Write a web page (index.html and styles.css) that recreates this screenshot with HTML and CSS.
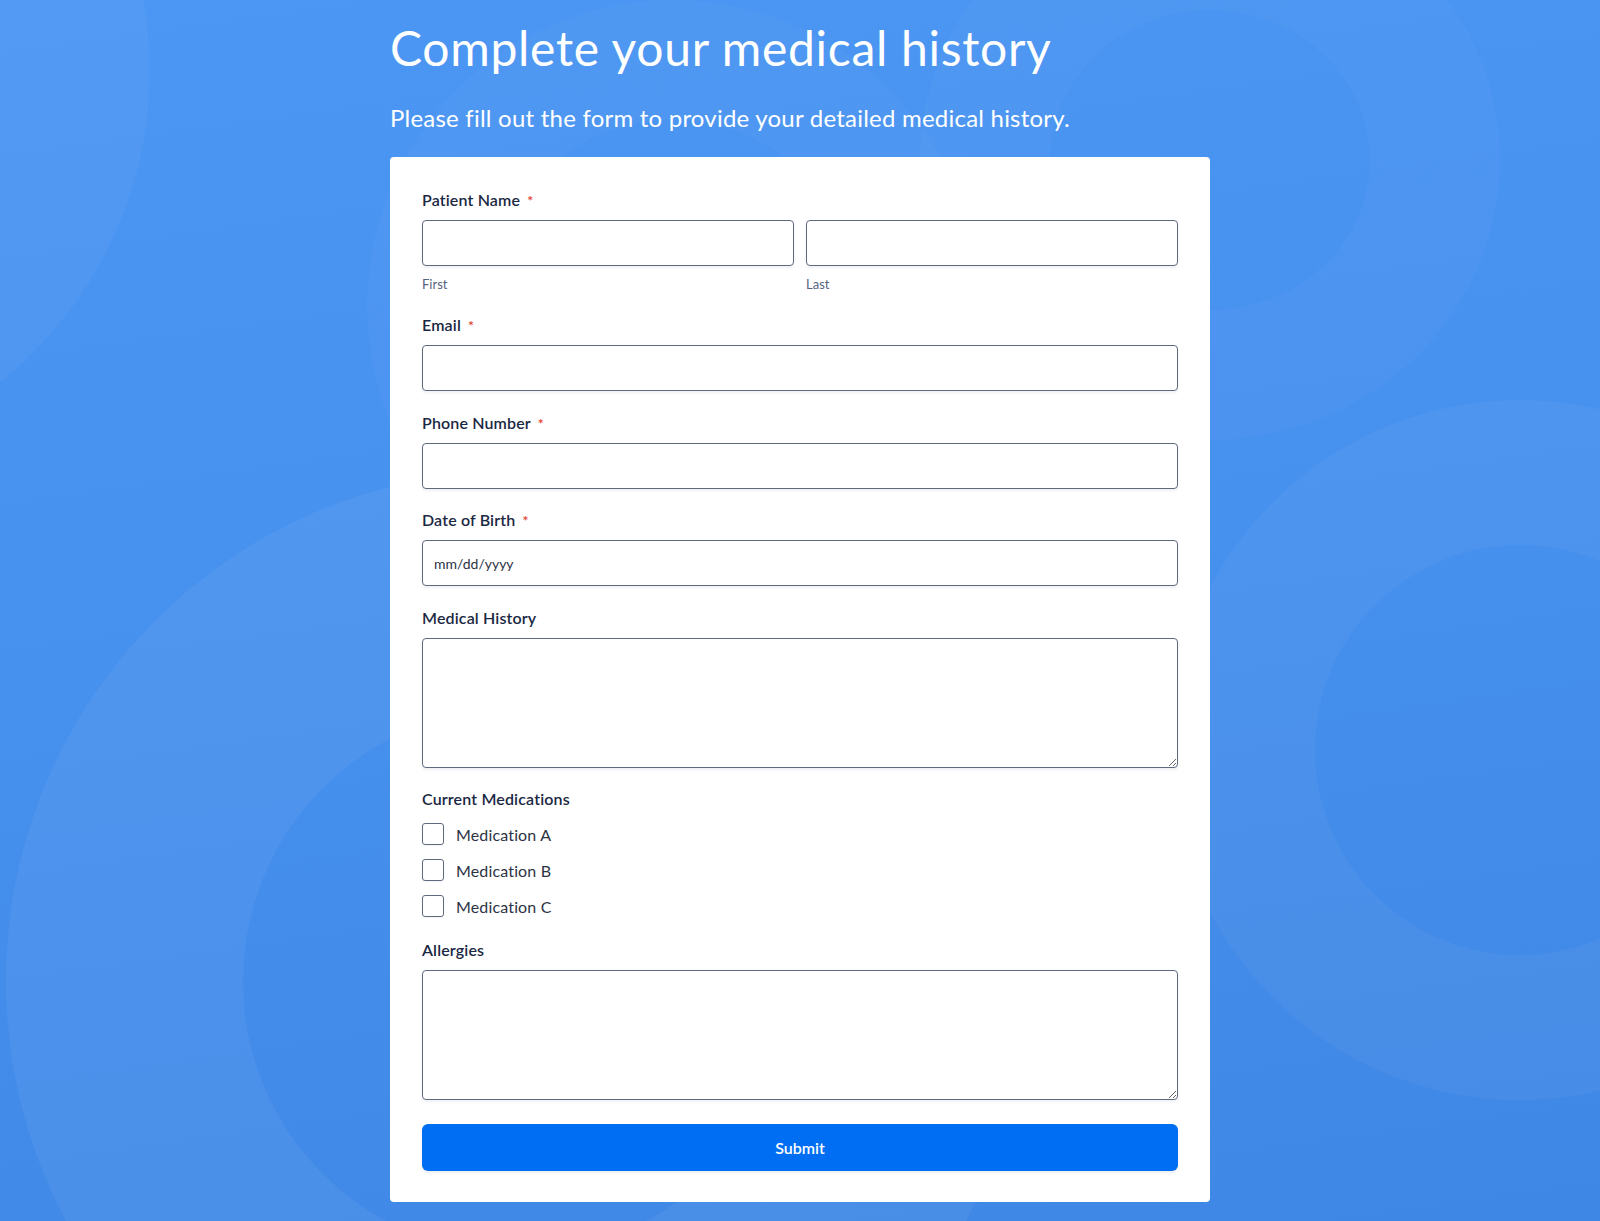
FILE: index.html
```html
<!DOCTYPE html>
<html lang="en">
<head>
<meta charset="utf-8">
<title>Complete your medical history</title>
<link rel="stylesheet" href="styles.css">
</head>
<body>
<div class="bg" aria-hidden="true">
  <div class="ring ring-a"></div>
  <div class="ring ring-b"></div>
  <div class="ring ring-c"></div>
  <div class="ring ring-d"></div>
  <div class="ring ring-e"></div>
</div>
<main class="page">
  <h1 class="title">Complete your medical history</h1>
  <p class="subtitle">Please fill out the form to provide your detailed medical history.</p>
  <form class="card">
    <div class="field">
      <label class="label">Patient Name <span class="req">*</span></label>
      <div class="name-row">
        <div class="name-col">
          <input class="input" type="text">
          <span class="sublabel">First</span>
        </div>
        <div class="name-col">
          <input class="input" type="text">
          <span class="sublabel">Last</span>
        </div>
      </div>
    </div>
    <div class="field">
      <label class="label">Email <span class="req">*</span></label>
      <input class="input" type="email">
    </div>
    <div class="field">
      <label class="label">Phone Number <span class="req">*</span></label>
      <input class="input" type="tel">
    </div>
    <div class="field">
      <label class="label">Date of Birth <span class="req">*</span></label>
      <input class="input date" type="text" placeholder="mm/dd/yyyy">
    </div>
    <div class="field">
      <label class="label">Medical History</label>
      <textarea class="textarea"></textarea>
    </div>
    <div class="field">
      <label class="label">Current Medications</label>
      <div class="checks">
        <label class="check"><span class="box"></span><span>Medication A</span></label>
        <label class="check"><span class="box"></span><span>Medication B</span></label>
        <label class="check"><span class="box"></span><span>Medication C</span></label>
      </div>
    </div>
    <div class="field">
      <label class="label">Allergies</label>
      <textarea class="textarea"></textarea>
    </div>
    <button class="submit" type="button">Submit</button>
  </form>
</main>
</body>
</html>
```
FILE: styles.css
```css
* { box-sizing: border-box; }
html, body { margin: 0; padding: 0; }
body {
  font-family: Lato, "Open Sans", Arial, sans-serif;
  min-height: 1221px;
  background: linear-gradient(172deg, #4c97f3 0%, #4690ee 50%, #3f87e4 100%);
  position: relative;
  overflow: hidden;
}
.bg {
  position: absolute;
  inset: 0;
  overflow: hidden;
  z-index: 0;
}
.ring {
  position: absolute;
  border-radius: 50%;
  border-style: solid;
  background: transparent;
}
.ring-a {
  left: 6px; top: 471px;
  width: 1020px; height: 1020px;
  border-width: 237px;
  border-color: rgba(255,255,255,0.05);
}
.ring-b {
  left: 1170px; top: 400px;
  width: 700px; height: 700px;
  border-width: 145px;
  border-color: rgba(255,255,255,0.04);
}
.ring-c {
  left: 920px; top: -120px;
  width: 580px; height: 560px;
  border-width: 130px;
  border-color: rgba(255,255,255,0.022);
}
.ring-d {
  left: -650px; top: -330px;
  width: 800px; height: 800px;
  border-width: 400px;
  border-color: rgba(255,255,255,0.035);
}
.ring-e {
  left: 367px; top: 0px;
  width: 612px; height: 612px;
  border-width: 120px;
  border-color: rgba(255,255,255,0.025);
}
.page {
  position: relative;
  z-index: 1;
  width: 820px;
  margin: 0 auto;
  padding-top: 19px;
}
.title {
  margin: 0;
  font-size: 48px;
  line-height: 57.6px;
  font-weight: 400;
  color: #fff;
  letter-spacing: 0.7px;
}
.subtitle {
  margin: 27px 0 0;
  font-size: 24px;
  line-height: 28.8px;
  font-weight: 400;
  color: #fff;
  letter-spacing: 0.22px;
}
.card {
  margin-top: 25px;
  background: #fff;
  border-radius: 4px;
  padding: 33px 32px 31px;
  display: flex;
  flex-direction: column;
  gap: 21.5px;
}
.field {
  display: flex;
  flex-direction: column;
}
.label {
  font-size: 16px;
  line-height: 20px;
  font-weight: 600;
  color: #1b2843;
  margin-bottom: 10px;
  letter-spacing: 0.15px;
}
.req {
  color: #e23b2c;
  font-size: 14px;
  line-height: 0;
  margin-left: 3px;
  vertical-align: 0;
}
.name-row {
  display: flex;
  gap: 12px;
  margin-bottom: 1.5px;
}
.name-col {
  flex: 1;
  display: flex;
  flex-direction: column;
}
.sublabel {
  margin-top: 10px;
  font-size: 13px;
  line-height: 16px;
  color: #57647e;
}
.input, .textarea {
  display: block;
  width: 100%;
  height: 46px;
  border: 1px solid #5f6a7f;
  border-radius: 4px;
  background: #fff;
  box-shadow: 0 2px 3px rgba(20, 40, 80, 0.07);
  font-family: Lato, Arial, sans-serif;
  font-size: 14px;
  color: #2c3345;
  padding: 0 11px;
  margin: 0;
  outline: none;
}
.date::placeholder {
  color: #2c3345;
  opacity: 1;
}
.textarea {
  height: 130px;
  padding: 10px 11px;
  resize: vertical;
}
.checks {
  display: flex;
  flex-direction: column;
  gap: 14px;
  margin-top: 4px;
  padding-bottom: 1px;
}
.check {
  display: flex;
  align-items: center;
  gap: 12px;
  height: 22px;
  font-size: 16px;
  color: #2c3345;
  letter-spacing: 0.15px;
}
.box {
  width: 22px;
  height: 22px;
  border: 1px solid #5f6a7f;
  border-radius: 3px;
  background: #fff;
  box-shadow: 0 1px 2px rgba(20, 40, 80, 0.06);
  flex: none;
}
.submit {
  margin-top: 2.5px;
  height: 47px;
  width: 100%;
  border: none;
  border-radius: 6px;
  background: #006ef2;
  color: #fff;
  font-family: Lato, Arial, sans-serif;
  font-size: 16px;
  font-weight: 600;
  box-shadow: 0 2px 3px rgba(20, 40, 80, 0.08);
}
```
